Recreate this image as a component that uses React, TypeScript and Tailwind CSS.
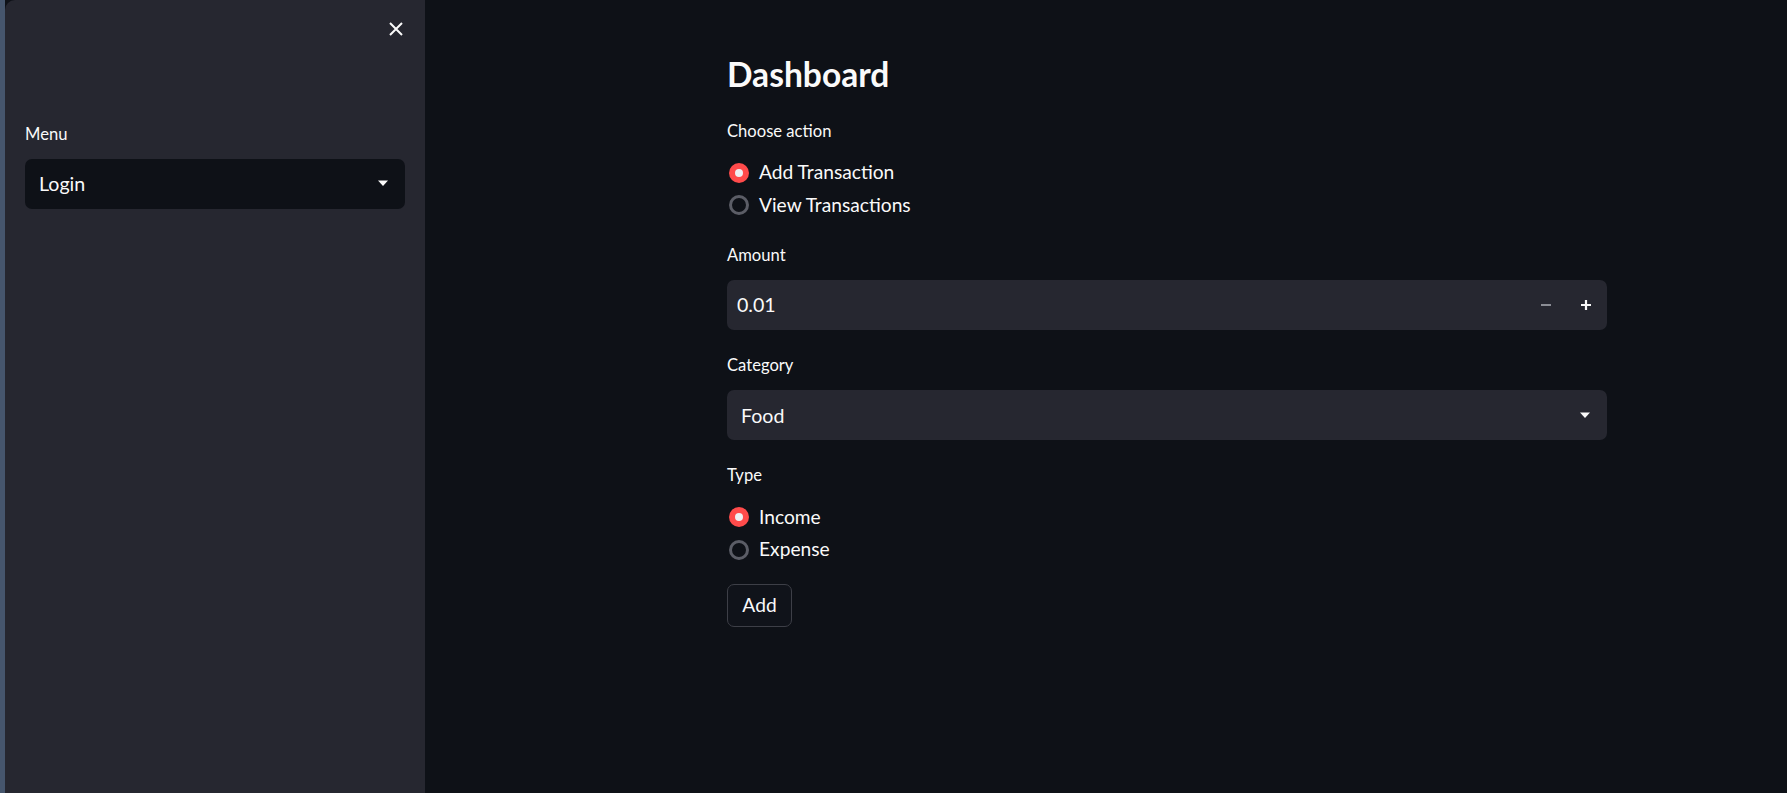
import { ReactNode } from 'react'

const font = { fontFamily: 'Lato, "Noto Sans", sans-serif' }

function Label({ children, className = '' }: { children: ReactNode; className?: string }) {
  return <div className={`h-[24px] text-[16.6px] leading-[24px] text-[#fafafa] ${className}`}>{children}</div>
}

function Caret() {
  return (
    <svg width="12" height="7" viewBox="0 0 12 7" className="fill-[#fafafa]">
      <path d="M1 0.5h10L6 6z" />
    </svg>
  )
}

function Radio({ label, checked }: { label: string; checked?: boolean }) {
  return (
    <div className="flex h-[32.5px] items-center">
      {checked ? (
        <span className="ml-[2px] flex h-[20px] w-[20px] items-center justify-center rounded-full bg-[#ff4b4b]">
          <span className="h-[8px] w-[8px] rounded-full bg-[#eef0f3]" />
        </span>
      ) : (
        <span className="ml-[2px] h-[20px] w-[20px] rounded-full border-[3px] border-[#5b5d66]" />
      )}
      <span className="ml-[10px] text-[19.2px] text-[#fafafa]">{label}</span>
    </div>
  )
}

function SelectBox({ value, dark }: { value: string; dark?: boolean }) {
  return (
    <div
      className={`flex h-[50px] items-center justify-between rounded-[7px] pl-[14px] pr-[16px] ${
        dark ? 'bg-[#0e1117]' : 'bg-[#262730]'
      }`}
    >
      <span className="text-[19.6px] text-[#fafafa]">{value}</span>
      <Caret />
    </div>
  )
}

export default function App() {
  return (
    <div className="flex h-[793px] w-full overflow-hidden bg-[#0e1117]" style={font}>
      <div className="w-[5px] shrink-0 bg-[#46566d]" />
      {/* Sidebar */}
      <aside className="w-[420px] shrink-0 rounded-tl-[10px] bg-[#262730] px-[20px]">
        <div className="flex h-[58px] items-center justify-end pr-[1px]">
          <svg width="16" height="16" viewBox="0 0 16 16" className="stroke-[#fafafa]" strokeWidth="2">
            <path d="M2 2l12 12M14 2L2 14" />
          </svg>
        </div>
        <Label className="mt-[63.6px]">Menu</Label>
        <div className="mt-[13.4px]">
          <SelectBox value="Login" dark />
        </div>
      </aside>

      {/* Main */}
      <main className="flex-1 pl-[302px] pt-[54px]">
        <div className="w-[880px]">
          <h1 className="h-[40px] text-[33.6px] font-bold leading-[40px] text-[#fafafa]">Dashboard</h1>
          <Label className="mt-[25px]">Choose action</Label>
          <div className="mt-[13.5px]">
            <Radio label="Add Transaction" checked />
            <Radio label="View Transactions" />
          </div>

          <Label className="mt-[21px]">Amount</Label>
          <div className="mt-[13px] flex h-[50px] items-center rounded-[7px] bg-[#262730] pl-[10px] pr-[15px]">
            <span className="flex-1 text-[19.6px] text-[#fafafa]">0.01</span>
            <span className="block h-[2px] w-[10px] bg-[#8b8d95]" />
            <svg width="12" height="12" viewBox="0 0 12 12" className="ml-[29px] stroke-[#fafafa]" strokeWidth="2.2">
              <path d="M6 1v10M1 6h10" />
            </svg>
          </div>

          <Label className="mt-[23.6px]">Category</Label>
          <div className="mt-[13.4px]">
            <SelectBox value="Food" />
          </div>

          <Label className="mt-[22.6px]">Type</Label>
          <div className="mt-[14px]">
            <Radio label="Income" checked />
            <Radio label="Expense" />
          </div>

          <button className="mt-[17.5px] h-[43px] w-[65px] rounded-[7px] border border-[#3d3f47] bg-[#10131a] text-[19.2px] text-[#fafafa]">
            Add
          </button>
        </div>
      </main>
    </div>
  )
}
